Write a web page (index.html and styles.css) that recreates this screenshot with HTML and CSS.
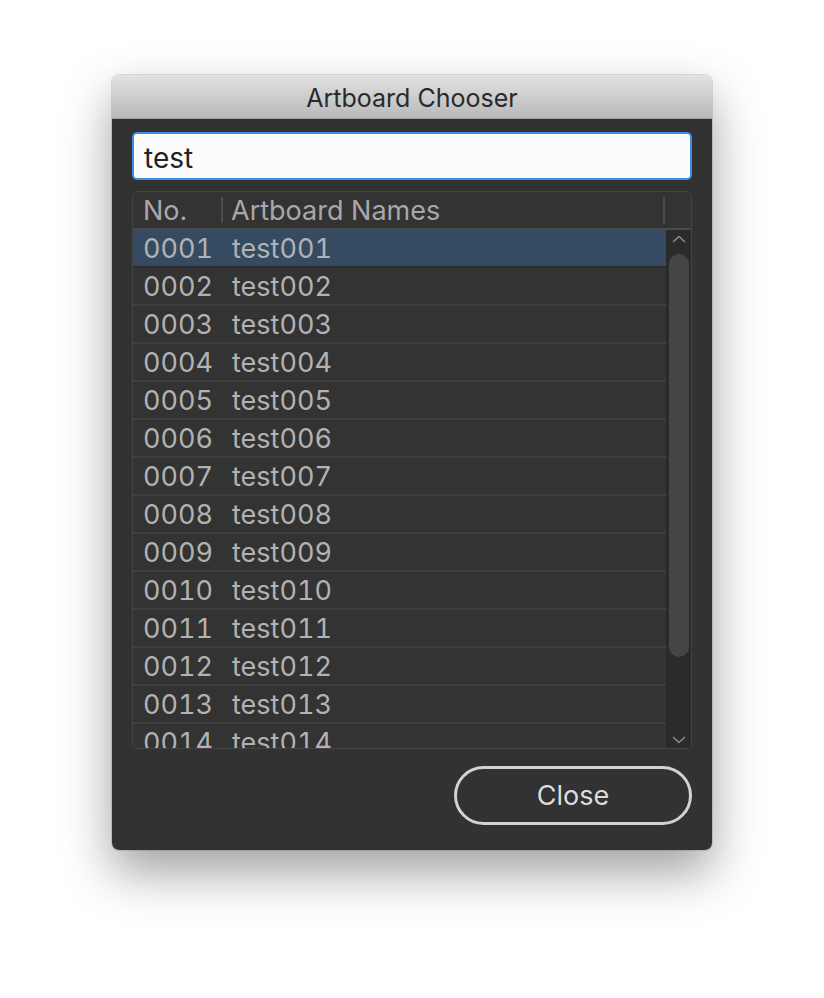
FILE: index.html
```html
<!DOCTYPE html>
<html>
<head>
<meta charset="utf-8">
<link rel="stylesheet" href="styles.css">
</head>
<body>
<div class="window">
  <div class="titlebar">Artboard Chooser</div>
  <div class="content">
    <div class="search">test</div>
    <div class="table">
      <div class="thead">
        <div class="th th-no">No.</div>
        <div class="th th-name">Artboard Names</div>
        <div class="th th-end"></div>
      </div>
      <div class="tbody">
        <div class="rows">
          <div class="row selected"><span class="c-no">0001</span><span class="c-name">test001</span></div>
          <div class="row"><span class="c-no">0002</span><span class="c-name">test002</span></div>
          <div class="row"><span class="c-no">0003</span><span class="c-name">test003</span></div>
          <div class="row"><span class="c-no">0004</span><span class="c-name">test004</span></div>
          <div class="row"><span class="c-no">0005</span><span class="c-name">test005</span></div>
          <div class="row"><span class="c-no">0006</span><span class="c-name">test006</span></div>
          <div class="row"><span class="c-no">0007</span><span class="c-name">test007</span></div>
          <div class="row"><span class="c-no">0008</span><span class="c-name">test008</span></div>
          <div class="row"><span class="c-no">0009</span><span class="c-name">test009</span></div>
          <div class="row"><span class="c-no">0010</span><span class="c-name">test010</span></div>
          <div class="row"><span class="c-no">0011</span><span class="c-name">test011</span></div>
          <div class="row"><span class="c-no">0012</span><span class="c-name">test012</span></div>
          <div class="row"><span class="c-no">0013</span><span class="c-name">test013</span></div>
          <div class="row"><span class="c-no">0014</span><span class="c-name">test014</span></div>
        </div>
        <div class="scrollbar">
          <svg class="arrow" width="16" height="10" viewBox="0 0 16 10"><path d="M2 8 L8 2.5 L14 8" fill="none" stroke="#8a8a8a" stroke-width="1.6"/></svg>
          <div class="thumb"></div>
          <div class="spacer"></div>
          <svg class="arrow" width="16" height="10" viewBox="0 0 16 10"><path d="M2 2 L8 7.5 L14 2" fill="none" stroke="#8a8a8a" stroke-width="1.6"/></svg>
        </div>
      </div>
    </div>
    <div class="actions">
      <div class="btn">Close</div>
    </div>
  </div>
</div>
</body>
</html>
```
FILE: styles.css
```css
html, body {
  margin: 0;
  padding: 0;
  background: #ffffff;
}
body {
  width: 824px;
  height: 998px;
  overflow: hidden;
  font-family: "Inter", "Noto Sans", "Liberation Sans", sans-serif;
}
.window {
  margin: 75px 0 0 112px;
  width: 600px;
  border-radius: 7px;
  overflow: hidden;
  box-shadow: 0 22px 50px rgba(0,0,0,0.38), 0 0 0 1px rgba(0,0,0,0.12);
  display: flex;
  flex-direction: column;
}
.titlebar {
  height: 44px;
  box-sizing: border-box;
  background: linear-gradient(#e2e2e2, #b9b9b9);
  border-bottom: 1px solid #9d9d9d;
  color: #2a2a2a;
  font-size: 25px;
  display: flex;
  align-items: center;
  justify-content: center;
  padding-top: 2px;
}
.content {
  background: #323232;
  padding: 13px 20px 25px 20px;
  display: flex;
  flex-direction: column;
}
.search {
  height: 48px;
  box-sizing: border-box;
  border: 2px solid #3a8ee8;
  border-radius: 5px;
  background: #fcfcfc;
  color: #222;
  font-size: 28px;
  display: flex;
  align-items: center;
  padding: 3px 0 0 10px;
}
.table {
  margin-top: 11px;
  height: 558px;
  box-sizing: border-box;
  border: 1px solid #444444;
  border-radius: 5px;
  display: flex;
  flex-direction: column;
  overflow: hidden;
  background: #333333;
}
.thead {
  height: 38px;
  flex: none;
  display: flex;
  align-items: center;
  border-bottom: 2px solid #4b4b4b;
  box-sizing: border-box;
  color: #a8a8a8;
  font-size: 27px;
}
.th {
  height: 26px;
  display: flex;
  align-items: center;
}
.th-no {
  width: 78px;
  padding-left: 10px;
  border-right: 2px solid #4c4c4c;
}
.th-name {
  flex: 1;
  padding-left: 8px;
  border-right: 2px solid #4c4c4c;
}
.th-end {
  width: 26px;
}
.tbody {
  flex: 1;
  display: flex;
  overflow: hidden;
}
.rows {
  flex: 1;
  overflow: hidden;
}
.row {
  height: 36px;
  border-bottom: 2px solid #3f3f3f;
  display: flex;
  align-items: center;
  color: #b2b2b2;
  font-size: 27px;
  font-variant-numeric: tabular-nums;
  background: #333333;
}
.row.selected {
  background: #354b61;
  border-bottom-color: #2c2c2c;
}
.c-no {
  width: 99px;
  padding-left: 10px;
  box-sizing: border-box;
  flex: none;
}
.scrollbar {
  width: 25px;
  flex: none;
  background: #2b2b2b;
  border-left: 1px solid #282828;
  display: flex;
  flex-direction: column;
  align-items: center;
  padding: 4px 0 3px 0;
  box-sizing: border-box;
}
.arrow {
  flex: none;
}
.thumb {
  margin-top: 10px;
  width: 20px;
  height: 403px;
  border-radius: 10px;
  background: #454545;
}
.spacer {
  flex: 1;
}
.actions {
  margin-top: 17px;
  display: flex;
  justify-content: flex-end;
}
.btn {
  width: 238px;
  height: 59px;
  box-sizing: border-box;
  border: 3px solid #d2d2d2;
  border-radius: 30px;
  color: #dcdcdc;
  font-size: 27px;
  display: flex;
  align-items: center;
  justify-content: center;
}
```
